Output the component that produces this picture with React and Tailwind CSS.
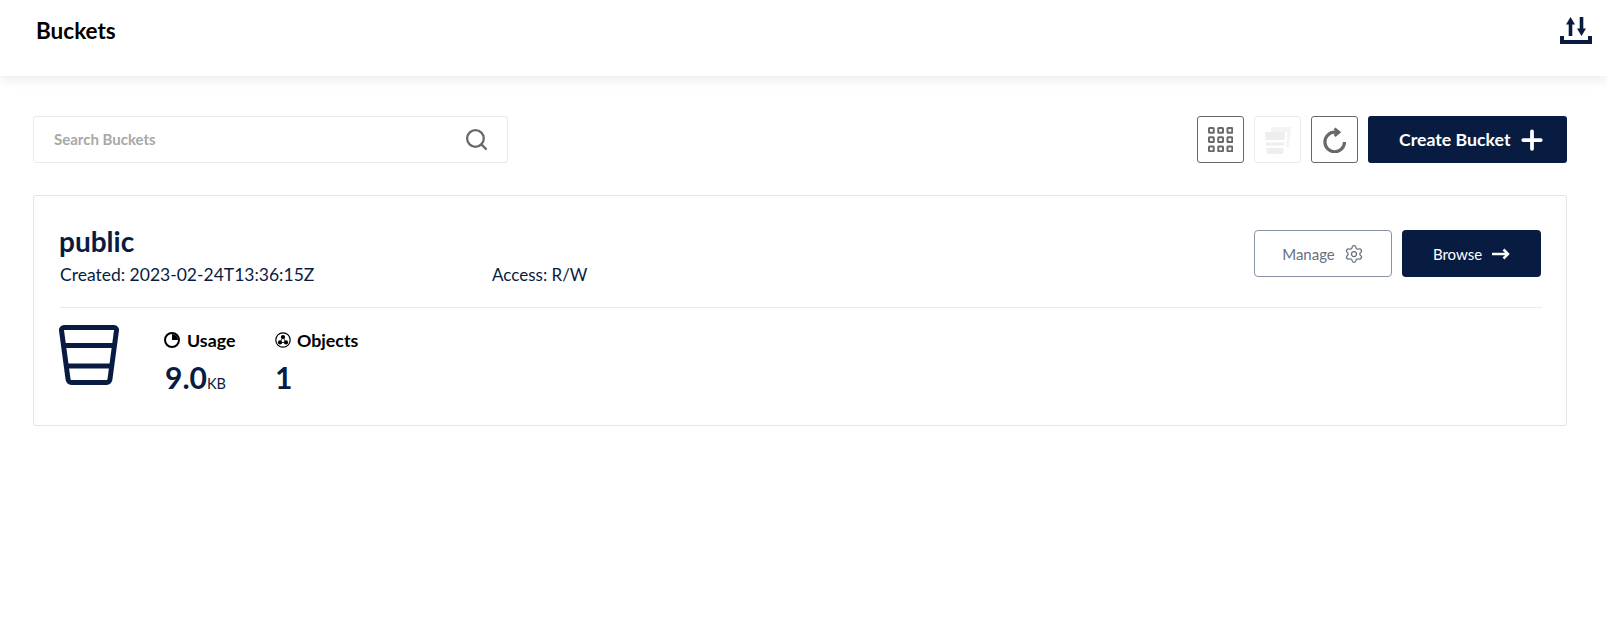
import { Plus, Settings, Search } from 'lucide-react';

const NAVY = 'text-[#081c42]';

function BucketIcon({ className }) {
  return (
    <svg viewBox="0 0 60 60" className={className} fill="none" stroke="currentColor" strokeWidth="5" strokeLinejoin="round">
      <path d="M5 2.500h50a2.500 2.500 0 0 1 2.500 2.800L51 54a3.500 3.500 0 0 1-3.500 3.500h-35A3.500 3.500 0 0 1 9 54L2.500 5.300A2.500 2.500 0 0 1 5 2.500z" />
      <path d="M5 20.500h50M8 41h44" />
    </svg>
  );
}

function MultiBucketIcon({ className }) {
  return (
    <svg viewBox="0 0 26 27" className={className}>
      <path d="M6 0h20l-2.400 20H21l1.500-15H6z" fill="#f4f4f4" />
      <path d="M0 5h20l-.5 8H.5z" fill="#eeeeee" />
      <path d="M.7 15.500h18.600l-.3 3H1z" fill="#eeeeee" />
      <path d="M1.200 21h17.600l-.6 5a1 1 0 0 1-1 1H2.800a1 1 0 0 1-1-1z" fill="#eeeeee" />
    </svg>
  );
}

function GridIcon({ className }) {
  const cells = [0, 8.500, 17];
  return (
    <svg viewBox="0 0 23 23" className={className} fill="none" stroke="currentColor" strokeWidth="1.800">
      {cells.map((y) =>
        cells.map((x) => <rect key={`${x}-${y}`} x={x + 0.9} y={y + 0.9} width="4.400" height="4.400" rx="0.500" />)
      )}
    </svg>
  );
}

function RefreshIcon({ className }) {
  return (
    <svg viewBox="0 0 24 26" className={className} fill="none" stroke="currentColor" strokeWidth="3.200">
      <path d="M21.500 15a9.800 9.800 0 1 1-9.800-9.800h3.800" />
      <path d="M11.500 1.500l4.500 3.700-4.500 3.700" strokeWidth="2.800" />
    </svg>
  );
}

function TransferIcon({ className }) {
  return (
    <svg viewBox="0 0 32 27" className={className} fill="currentColor">
      <path d="M0 19h4v4h24v-4h4v8H0z" />
      <path d="M10.500 0L15 7.500h-2.700V19H8.700V7.500H6z" />
      <path d="M19.700 0h3.600v11.500H26L21.500 19 17 11.500h2.700z" />
    </svg>
  );
}

function UsageIcon({ className }) {
  return (
    <svg viewBox="0 0 16 16" className={className}>
      <circle cx="8" cy="8" r="7" fill="none" stroke="currentColor" strokeWidth="2" />
      <path d="M8 2a6 6 0 0 1 6 6H8z" fill="currentColor" />
    </svg>
  );
}

function ObjectsIcon({ className }) {
  return (
    <svg viewBox="0 0 16 16" className={className} fill="currentColor">
      <circle cx="8" cy="8" r="7.200" fill="none" stroke="currentColor" strokeWidth="1.200" />
      <path d="M8 5l-3 5.400h6z" fill="none" stroke="currentColor" strokeWidth="0.800" />
      <circle cx="8" cy="5" r="2.100" />
      <circle cx="5" cy="10.400" r="2.100" />
      <circle cx="11" cy="10.400" r="2.100" />
    </svg>
  );
}

function ArrowIcon({ className }) {
  return (
    <svg viewBox="0 0 18 12" className={className} fill="none" stroke="currentColor" strokeWidth="2.500">
      <path d="M0 6h16" />
      <path d="M11.500 1.500L16 6l-4.500 4.500" />
    </svg>
  );
}

function IconButton({ children, disabled }) {
  return (
    <button
      className={`w-[47px] h-[47px] flex items-center justify-center rounded-[3px] border ${
        disabled ? 'border-[#ebebeb]' : 'border-[#696969] text-[#696969]'
      }`}
    >
      {children}
    </button>
  );
}

export default function App() {
  return (
    <div className="min-h-screen bg-white font-['Lato','Noto_Sans',sans-serif]">
      <header className="h-[76px] flex items-center justify-between pl-9 pr-[15px] bg-white shadow-[0_3px_12px_rgba(0,0,0,0.09)]">
        <h1 className="text-[22.500px] font-bold text-black -mt-[14px]">Buckets</h1>
        <TransferIcon className={`w-8 h-[27px] -mt-[16px] ${NAVY}`} />
      </header>

      <main className="pt-10 pl-[33px] pr-10">
        <div className="flex justify-between items-center">
          <div className="w-[475px] h-[47px] flex items-center justify-between pl-5 pr-[18px] rounded-[3px] border border-[#eaeaea]">
            <span className="text-[15px] font-bold text-[#a8a8a8]">Search Buckets</span>
            <Search className="w-[25px] h-[25px] text-[#696969]" strokeWidth={2.200} />
          </div>
          <div className="flex items-center gap-[10px]">
            <IconButton>
              <GridIcon className="w-[25px] h-[25px]" />
            </IconButton>
            <IconButton disabled>
              <MultiBucketIcon className="w-[26px] h-[27px] mt-[2px]" />
            </IconButton>
            <IconButton>
              <RefreshIcon className="w-6 h-[26px]" />
            </IconButton>
            <button className="w-[199px] h-[47px] flex items-center gap-[7px] pl-[31px] pt-[1px] rounded-[3px] bg-[#081c42] text-white text-[17.700px] font-bold">
              Create Bucket
              <Plus className="w-[30px] h-[30px]" strokeWidth={3} />
            </button>
          </div>
        </div>

        <section className="mt-8 h-[231px] pl-[26px] pr-6 rounded-[2px] border border-[#e5e5e5]">
          <div className="flex justify-between h-[112px] border-b border-[#eaeaea]">
            <div className="pt-7">
              <h2 className={`-ml-[1px] text-[28px] leading-[34px] font-bold ${NAVY}`}>public</h2>
              <div className={`flex mt-[7px] text-[17.500px] leading-5 ${NAVY}`}>
                <span className="w-[432px]">Created: 2023-02-24T13:36:15Z</span>
                <span className="text-[17px]">Access: R/W</span>
              </div>
            </div>
            <div className="flex gap-[10px] pt-[34px] mr-[1px]">
              <button className="w-[138px] h-[47px] flex items-center justify-center gap-[9px] pt-[2px] rounded-[4px] border border-[#8a93a5] text-[#68717f] text-[15px]">
                Manage
                <Settings className="w-5 h-5 -mt-[2px]" strokeWidth={1.500} />
              </button>
              <button className="w-[139px] h-[47px] flex items-center justify-center gap-[10px] pt-[2px] rounded-[4px] bg-[#081c42] text-white text-[15px]">
                Browse
                <ArrowIcon className="w-[18px] h-3 -mt-[2px]" />
              </button>
            </div>
          </div>

          <div className="flex pt-[17px]">
            <BucketIcon className={`-ml-[1px] w-[60px] h-[60px] ${NAVY}`} />
            <div className="ml-[45px] w-[111px] pt-1">
              <div className="flex items-center gap-[7px] text-[17.800px] leading-[22px] font-bold text-black">
                <UsageIcon className="w-4 h-4" />
                Usage
              </div>
              <div className={`mt-2 ml-[1px] font-bold text-[30px] leading-9 ${NAVY}`}>
                9.0<span className="text-[14.500px] font-normal">KB</span>
              </div>
            </div>
            <div className="pt-1">
              <div className="flex items-center gap-[6px] text-[17.800px] leading-[22px] font-bold text-black">
                <ObjectsIcon className="w-4 h-4" />
                Objects
              </div>
              <div className={`mt-2 font-bold text-[30px] leading-9 ${NAVY}`}>1</div>
            </div>
          </div>
        </section>
      </main>
    </div>
  );
}
